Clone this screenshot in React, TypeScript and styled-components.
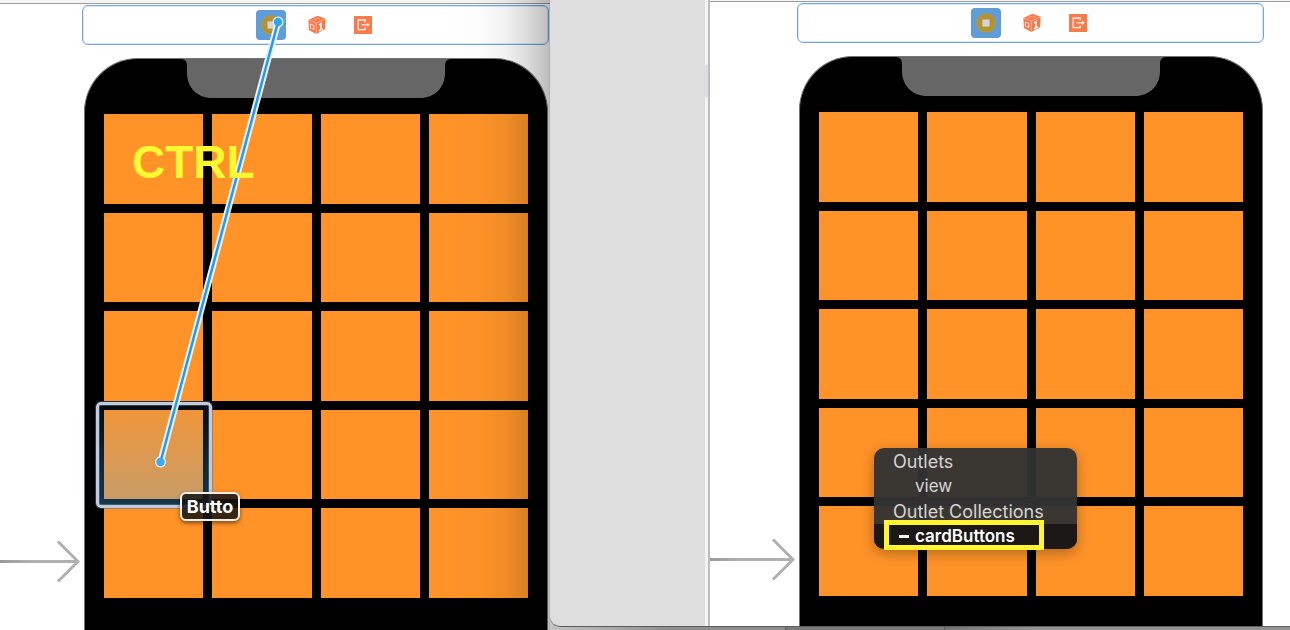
import React from 'react';
import styled, { createGlobalStyle } from 'styled-components';

const GlobalStyle = createGlobalStyle`
  * { box-sizing: border-box; }
  body {
    margin: 0;
    background: #fff;
    font-family: Inter, "Liberation Sans", sans-serif;
  }
  button { font: inherit; margin: 0; padding: 0; border: 0; }
`;

const Desktop = styled.main`
  display: grid;
  grid-template-columns: 550px minmax(0, 1fr);
  height: 100vh;
  min-height: 630px;
  overflow: hidden;
`;

const BackWindow = styled.section`
  position: relative;
  display: flex;
  min-width: 0;
  overflow: hidden;
`;

const EdgeShade = styled.div`
  position: absolute;
  top: 0;
  right: 0;
  bottom: 0;
  width: 100px;
  border-right: 1px solid rgba(0, 0, 0, 0.3);
  background: linear-gradient(
    to right,
    rgba(0, 0, 0, 0) 0%,
    rgba(0, 0, 0, 0.01) 30%,
    rgba(0, 0, 0, 0.05) 55%,
    rgba(0, 0, 0, 0.14) 78%,
    rgba(0, 0, 0, 0.26) 100%
  );
  pointer-events: none;
`;

const FrontArea = styled.div`
  display: flex;
  min-width: 0;
  padding-bottom: 3px;
  background: linear-gradient(to right, #c4c4c4 0, #8e8e8e 120px, #8e8e8e 235px, #555 235px, #7c7c7c 237px, #7c7c7c 394px, #555 394px, #767676 396px, #949494 480px);
`;

const FrontWindow = styled.section`
  position: relative;
  display: flex;
  flex: 1;
  min-width: 0;
  overflow: hidden;
  background: #dedede;
  border-bottom: 1px solid #5c5c5c;
  border-bottom-left-radius: 10px;
`;

const Sidebar = styled.aside`
  flex: 0 0 155px;
`;

const Gutter = styled.div`
  flex: 0 0 5px;
  padding-top: 65px;
  background: #f3f3f6;
  border-right: 2px solid #bdbdbd;
`;

const GutterMark = styled.div`
  height: 32px;
  background: #dddde8;
`;

const Canvas = styled.div`
  display: flex;
  flex: 1;
  flex-direction: column;
  min-width: 0;
  background: #fff;
`;

const TopEdge = styled.div<{ $height: number }>`
  flex: 0 0 ${p => p.$height}px;
  background: #f4f5f4;
  border-bottom: 1px solid #9c9c9c;
`;

const Scene = styled.div`
  display: flex;
  flex: 1;
  min-height: 0;
`;

const ArrowColumn = styled.div<{ $width: number }>`
  display: flex;
  flex: 0 0 ${p => p.$width}px;
  align-items: flex-start;
  justify-content: flex-end;
  padding: 535px 2px 0 0;
`;

const ArrowStem = styled.div`
  flex: 1;
  height: 3px;
  margin-top: 21px;
  background: linear-gradient(to right, #9a9a9a, #b0b0b0 30px);
`;

const Stage = styled.div`
  display: flex;
  flex: 0 0 467px;
  flex-direction: column;
  gap: 13px;
  padding-top: 1px;
`;

const Dock = styled.div`
  display: flex;
  flex: 0 0 40px;
  align-items: center;
  justify-content: center;
  gap: 16px;
  padding-left: 2px;
  border: 1px solid #6ea7e2;
  border-radius: 6px;
  box-shadow: inset 0 0 0 1px #d9e9f9;
`;

const DockButton = styled.button<{ $active?: boolean }>`
  display: flex;
  align-items: center;
  justify-content: center;
  width: 30px;
  height: 30px;
  border-radius: 4px;
  background: ${p => (p.$active ? '#5f9dd9' : 'transparent')};
`;

const Phone = styled.div`
  position: relative;
  flex: 1;
  width: 464px;
  margin-left: 2px;
  padding: 55px 19px 0;
  border: 1px solid #747474;
  border-bottom: 0;
  border-radius: 54px 54px 0 0;
  background: #000;
`;

const NotchShape = styled.svg`
  position: absolute;
  top: 0;
  left: 96px;
`;

const CardGrid = styled.div`
  display: grid;
  grid-template-columns: repeat(4, 1fr);
  grid-template-rows: repeat(5, 1fr);
  gap: 9px;
  height: 484px;
`;

const Card = styled.button`
  background: #ff9328;
`;

const SelectedFrame = styled.div`
  position: absolute;
  left: 96px;
  top: 402px;
  width: 116px;
  height: 106px;
  border: 3px solid #c3cbd8;
  border-radius: 5px;
  box-shadow: 0 0 0 1px rgba(70, 110, 170, 0.5), inset 0 0 0 1px rgba(120, 160, 210, 0.35);
  background: linear-gradient(rgba(71, 170, 255, 0.07), rgba(71, 180, 255, 0.31));
`;

const ConnectionLine = styled.svg`
  position: absolute;
  left: 0;
  top: 0;
`;

const KeyLabel = styled.div`
  position: absolute;
  left: 132px;
  top: 136px;
  color: #fff833;
  font: bold 46px/52px "Liberation Sans", Arial, sans-serif;
`;

const TargetLabel = styled.div`
  position: absolute;
  left: 180px;
  top: 492px;
  width: 60px;
  height: 29px;
  border: 2px solid #f4efe8;
  border-radius: 6px;
  background: rgba(22, 20, 18, 0.86);
  box-shadow: 0 2px 4px rgba(0, 0, 0, 0.5);
  color: #fff;
  font-size: 18px;
  font-weight: 700;
  line-height: 26px;
  text-align: center;
`;

const OutletMenu = styled.div`
  position: absolute;
  left: 324px;
  top: 448px;
  width: 203px;
  padding-top: 1px;
  border-radius: 10px;
  overflow: hidden;
  background: rgba(50, 50, 50, 0.96);
  box-shadow: 0 4px 14px rgba(0, 0, 0, 0.3);
`;

const MenuHeading = styled.div`
  padding-left: 19px;
  color: #d6d6d6;
  font-size: 18px;
  line-height: 25px;
`;

const MenuItem = styled.button<{ $active?: boolean }>`
  display: flex;
  align-items: center;
  width: 100%;
  height: 25px;
  padding-left: 25px;
  background: ${p => (p.$active ? '#1b1816' : 'transparent')};
  color: ${p => (p.$active ? '#fff' : '#d6d6d6')};
  font-size: 17px;
  font-weight: ${p => (p.$active ? 600 : 400)};
  line-height: 25px;
`;

const MenuMark = styled.span<{ $visible?: boolean }>`
  width: 10px;
  height: 3px;
  margin-right: 6px;
  background: ${p => (p.$visible ? '#fff' : 'transparent')};
`;

const Highlight = styled.div`
  position: absolute;
  left: 334px;
  top: 520px;
  width: 160px;
  height: 30px;
  border: 5px solid #fff533;
  pointer-events: none;
`;

function ControllerIcon() {
  return (
    <svg width="20" height="20" viewBox="0 0 20 20">
      <circle cx="10" cy="10" r="9.8" fill="#b8952f" />
      <circle cx="10" cy="10" r="7.4" fill="none" stroke="#ad8d36" />
      <rect x="6" y="6" width="8" height="8" fill="#d5d5d2" stroke="#a08c50" strokeWidth="0.8" />
    </svg>
  );
}

function ResponderIcon() {
  return (
    <svg width="18" height="20" viewBox="0 0 18 20">
      <path d="M9.6 .8 17.6 3.8 17.2 14 8.4 19 .9 15.1 .4 5Z" fill="#f9784b" />
      <path d="M.5 5 8.2 8 17.5 3.9M8.2 8V18.8" fill="none" stroke="#ffc4ae" strokeWidth="0.7" />
      <path d="M2.4 9 5.8 10.3V14.6L2.4 13Z" fill="none" stroke="#ffe0d4" strokeWidth="1" />
      <path d="M10.8 10 12.9 8.6V15M10.8 15.8 14.8 13.8" fill="none" stroke="#fff" strokeWidth="1.5" />
      <path d="M5.5 4.7 9.5 3.2 12.5 4.3" fill="none" stroke="#ffb294" strokeWidth="0.8" />
    </svg>
  );
}

function ExitIcon() {
  return (
    <svg width="18" height="18" viewBox="0 0 18 18">
      <rect width="18" height="18" fill="#fa7a49" />
      <path d="M11.2 6.4V4H4.2V13.6H11.2V11.2" fill="none" stroke="#fff0e9" strokeWidth="1.3" />
      <path d="M7.5 8.8H14.6" stroke="#fff0e9" strokeWidth="1.3" />
      <path d="M13 6.5 15.8 8.8 13 11.1Z" fill="#fff0e9" />
    </svg>
  );
}

function EntryArrow({ width }: { width: number }) {
  return (
    <ArrowColumn $width={width}>
      <ArrowStem />
      <svg width="24" height="45" viewBox="0 0 24 45">
        <path d="M2 2.5 22 22.5 2 42.5M0 22.5H22" fill="none" stroke="#b0b0b0" strokeWidth="3" />
      </svg>
    </ArrowColumn>
  );
}

function Storyboard({ edge, arrow }: { edge: number; arrow: number }) {
  return (
    <Canvas>
      <TopEdge $height={edge} />
      <Scene>
        <EntryArrow width={arrow} />
        <Stage>
          <Dock>
            <DockButton $active aria-label="View Controller"><ControllerIcon /></DockButton>
            <DockButton aria-label="First Responder"><ResponderIcon /></DockButton>
            <DockButton aria-label="Exit"><ExitIcon /></DockButton>
          </Dock>
          <Phone>
            <NotchShape width="270" height="40" viewBox="0 0 270 40">
              <path d="M0 0Q6 0 6 7V14C6 29 17 39 31 39H239C253 39 264 29 264 14V7Q264 0 270 0Z" fill="#666" />
            </NotchShape>
            <CardGrid>
              {Array.from({ length: 20 }, (_, i) => (
                <Card key={i} aria-label={`Card ${i + 1}`} />
              ))}
            </CardGrid>
          </Phone>
        </Stage>
      </Scene>
    </Canvas>
  );
}

export default function App() {
  return (
    <>
      <GlobalStyle />
      <Desktop>
        <BackWindow>
          <Storyboard edge={4} arrow={82} />
          <EdgeShade />
          <SelectedFrame />
          <ConnectionLine width="300" height="480" viewBox="0 0 300 480">
            <path d="M278 22 160.500 462" stroke="#eef1f3" strokeWidth="6.500" />
            <circle cx="278" cy="22" r="5.500" fill="#eef1f3" />
            <circle cx="160.500" cy="462" r="5.500" fill="#eef1f3" />
            <path d="M278 22 160.500 462" stroke="#1c9cf6" strokeWidth="2.500" />
            <circle cx="278" cy="22" r="4.200" fill="#2ea5f8" />
            <circle cx="160.500" cy="462" r="4.200" fill="#3aa9f8" />
          </ConnectionLine>
          <KeyLabel>CTRL</KeyLabel>
          <TargetLabel>Butto</TargetLabel>
        </BackWindow>
        <FrontArea>
          <FrontWindow>
            <Sidebar />
            <Gutter><GutterMark /></Gutter>
            <Storyboard edge={2} arrow={87} />
            <OutletMenu>
              <MenuHeading>Outlets</MenuHeading>
              <MenuItem><MenuMark />view</MenuItem>
              <MenuHeading>Outlet Collections</MenuHeading>
              <MenuItem $active><MenuMark $visible />cardButtons</MenuItem>
            </OutletMenu>
            <Highlight />
          </FrontWindow>
        </FrontArea>
      </Desktop>
    </>
  );
}
